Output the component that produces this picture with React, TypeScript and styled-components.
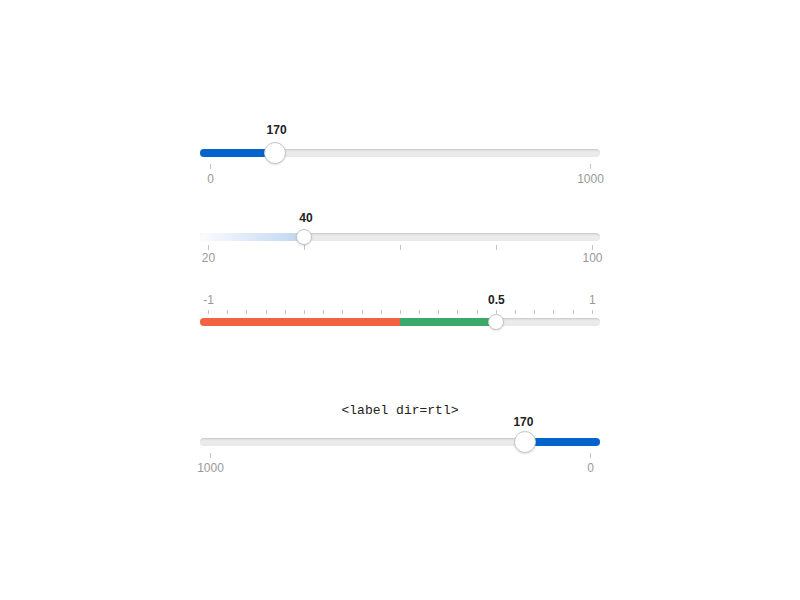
import React from "react";
import styled, { createGlobalStyle } from "styled-components";

const GlobalStyle = createGlobalStyle`
  html, body {
    margin: 0;
    padding: 0;
    background: #fff;
  }
  body {
    font-family: "Liberation Sans", Arial, sans-serif;
  }
`;

const WIDTH = 400;
const BLUE = "#0564cb";
const RED = "#f46245";
const GREEN = "#3aa96b";

const Page = styled.div`
  width: 800px;
  height: 600px;
  display: flex;
  justify-content: center;
`;

const Column = styled.div`
  width: ${WIDTH}px;
  padding-top: 120px;
  display: flex;
  flex-direction: column;
`;

const SliderBlock = styled.div<{ $mt?: number }>`
  display: flex;
  flex-direction: column;
  margin-top: ${(p) => p.$mt ?? 0}px;
`;

// row that holds the floating value label over the handle
const ValueRow = styled.div<{ $h: number }>`
  position: relative;
  height: ${(p) => p.$h}px;
`;

const ValueLabel = styled.span<{ $lh: number }>`
  position: absolute;
  top: 0;
  transform: translateX(-50%);
  font-size: 12px;
  font-weight: bold;
  color: #222;
  line-height: ${(p) => p.$lh}px;
  white-space: nowrap;
`;

const TrackRow = styled.div<{ $h: number; $mt?: number }>`
  position: relative;
  height: ${(p) => p.$h}px;
  margin-top: ${(p) => p.$mt ?? 0}px;
  display: flex;
  align-items: center;
`;

const Track = styled.div`
  position: relative;
  flex: 1;
  height: 8px;
  border-radius: 4px;
  background: linear-gradient(#dcdcdc, #ececec 45%, #e9e9e9);
  box-shadow: inset 0 1px 1px rgba(0, 0, 0, 0.08);
  overflow: hidden;
  display: flex;
`;

const Fill = styled.div<{ $bg: string }>`
  height: 100%;
  flex-shrink: 0;
  background: ${(p) => p.$bg};
`;

const Spacer = styled.div`
  flex: 1;
`;

const Handle = styled.div<{ $size: number }>`
  position: absolute;
  top: 50%;
  width: ${(p) => p.$size}px;
  height: ${(p) => p.$size}px;
  margin-top: ${(p) => -p.$size / 2}px;
  margin-left: ${(p) => -p.$size / 2}px;
  box-sizing: border-box;
  border-radius: 50%;
  background: #fff;
  border: 1px solid #c6c6c6;
  box-shadow: 0 1px 2px rgba(0, 0, 0, 0.12);
`;

const TickRow = styled.div<{ $inset: number; $h: number; $mt?: number }>`
  display: flex;
  justify-content: space-between;
  padding: 0 ${(p) => p.$inset - 1}px 0 ${(p) => p.$inset}px;
  height: ${(p) => p.$h}px;
  margin-top: ${(p) => p.$mt ?? 0}px;
`;

const Tick = styled.span`
  width: 1px;
  height: 100%;
  background: #c4c4c4;
`;

const LabelRow = styled.div<{ $inset: number; $mt?: number }>`
  display: flex;
  justify-content: space-between;
  padding: 0 ${(p) => p.$inset - 1}px 0 ${(p) => p.$inset}px;
  height: 14px;
  margin-top: ${(p) => p.$mt ?? 0}px;
`;

const Slot = styled.span<{ $bold?: boolean }>`
  width: 1px;
  display: flex;
  justify-content: center;
  white-space: nowrap;
  font-size: 12px;
  line-height: 14px;
  color: ${(p) => (p.$bold ? "#222" : "#999")};
  font-weight: ${(p) => (p.$bold ? "bold" : "normal")};
`;

const Caption = styled.div`
  height: 12px;
  line-height: 12px;
  text-align: center;
  font-family: "Liberation Mono", "Courier New", monospace;
  font-size: 13px;
  color: #222;
`;

const pos = (v: number, min: number, max: number, inset: number, rtl = false) => {
  const t = (v - min) / (max - min);
  const span = WIDTH - inset * 2;
  return rtl ? WIDTH - inset - t * span : inset + t * span;
};

export default function App() {
  const p1 = pos(170, 0, 1000, 10);
  const p2 = pos(40, 20, 100, 8);
  const p3 = pos(0.5, -1, 1, 8);
  const zero3 = WIDTH / 2;
  const ticks3 = Array.from({ length: 21 }, (_, i) => i);
  const labels3: Record<number, string> = { 0: "-1", 15: "0.5", 20: "1" };
  const p4 = pos(170, 0, 1000, 10, true);

  return (
    <Page>
      <GlobalStyle />
      <Column>
        <SliderBlock>
          <ValueRow $h={20}>
            <ValueLabel $lh={20} style={{ left: p1 + 2 }}>170</ValueLabel>
          </ValueRow>
          <TrackRow $h={22} $mt={2}>
            <Track>
              <Fill $bg={BLUE} style={{ width: p1 }} />
            </Track>
            <Handle $size={22} style={{ left: p1 }} />
          </TrackRow>
          <TickRow $inset={10} $h={5}>
            <Tick />
            <Tick />
          </TickRow>
          <LabelRow $inset={10} $mt={3}>
            <Slot>0</Slot>
            <Slot>1000</Slot>
          </LabelRow>
        </SliderBlock>

        <SliderBlock $mt={22}>
          <ValueRow $h={20}>
            <ValueLabel $lh={20} style={{ left: p2 + 2 }}>40</ValueLabel>
          </ValueRow>
          <TrackRow $h={16} $mt={1}>
            <Track>
              <Fill $bg="linear-gradient(to right, #fbfcfe, #bfd5f1)" style={{ width: p2 }} />
            </Track>
            <Handle $size={16} style={{ left: p2 }} />
          </TrackRow>
          <TickRow $inset={8} $h={5}>
            {[0, 1, 2, 3, 4].map((i) => (
              <Tick key={i} />
            ))}
          </TickRow>
          <LabelRow $inset={8} $mt={1}>
            <Slot>20</Slot>
            <Slot>100</Slot>
          </LabelRow>
        </SliderBlock>

        <SliderBlock $mt={28}>
          <LabelRow $inset={8}>
            {ticks3.map((i) => (
              <Slot key={i} $bold={i === 15}>
                {labels3[i] ?? ""}
              </Slot>
            ))}
          </LabelRow>
          <TickRow $inset={8} $h={4} $mt={3}>
            {ticks3.map((i) => (
              <Tick key={i} />
            ))}
          </TickRow>
          <TrackRow $h={16}>
            <Track>
              <Fill $bg={RED} style={{ width: zero3 }} />
              <Fill $bg={GREEN} style={{ width: p3 - zero3 }} />
            </Track>
            <Handle $size={16} style={{ left: p3 }} />
          </TrackRow>
        </SliderBlock>

        <SliderBlock $mt={75}>
          <Caption>&lt;label dir=rtl&gt;</Caption>
          <ValueRow $h={12}>
            <ValueLabel $lh={10} style={{ left: p4 - 2 }}>170</ValueLabel>
          </ValueRow>
          <TrackRow $h={22} $mt={2}>
            <Track>
              <Spacer />
              <Fill $bg={BLUE} style={{ width: WIDTH - p4 }} />
            </Track>
            <Handle $size={22} style={{ left: p4 }} />
          </TrackRow>
          <TickRow $inset={10} $h={5}>
            <Tick />
            <Tick />
          </TickRow>
          <LabelRow $inset={10} $mt={3}>
            <Slot>1000</Slot>
            <Slot>0</Slot>
          </LabelRow>
        </SliderBlock>
      </Column>
    </Page>
  );
}
